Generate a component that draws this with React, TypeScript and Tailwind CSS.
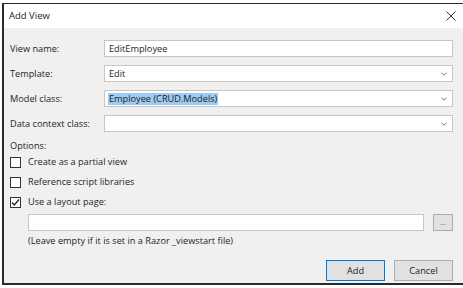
import React from "react";

const Chevron = () => (
  <svg width="6" height="4" viewBox="0 0 6 4" className="shrink-0 mr-[1px]">
    <path d="M0.5 0.8 L3 3.2 L5.5 0.8" fill="none" stroke="#7a7a7a" strokeWidth="1" />
  </svg>
);

const Field = ({ label, children }: { label: string; children: React.ReactNode }) => (
  <div className="flex items-center h-[17px]">
    <div className="w-[94px] shrink-0 text-[#1e1e1e]">{label}</div>
    {children}
  </div>
);

const Box = ({ children, select }: { children?: React.ReactNode; select?: boolean }) => (
  <div className="flex-1 h-[17px] bg-white border border-[#c6c6c6] flex items-center pl-[4px] pr-[4px]">
    <div className="flex-1 flex items-center">{children}</div>
    {select && <Chevron />}
  </div>
);

const Check = ({ label, checked }: { label: string; checked?: boolean }) => (
  <div className="flex items-center h-[20px]">
    <div className="w-[11px] h-[11px] border border-[#333] bg-white flex items-center justify-center mr-[7px]">
      {checked && (
        <svg width="9" height="9" viewBox="0 0 9 9">
          <path d="M1 4.5 L3.3 7 L8 1.5" fill="none" stroke="#222" strokeWidth="1.3" />
        </svg>
      )}
    </div>
    <span>{label}</span>
  </div>
);

export default function App() {
  return (
    <div
      className="w-[463px] h-[288px] bg-white pt-[3px] pl-[2px] pb-[3px] text-[9.2px] leading-[12px] text-[#1e1e1e]"
      style={{ fontFamily: "'Open Sans', 'Noto Sans', sans-serif" }}
    >
      <div className="h-full border-2 border-r-0 border-t-[1px] border-[#2a2a2a] bg-[#f0f0f0] flex flex-col">
        <div className="h-[24px] bg-white flex items-center justify-between pl-[5px] pr-[7px]">
          <span className="text-[9.5px]">Add View</span>
          <svg width="10" height="10" viewBox="0 0 10 10">
            <path d="M0.5 0.5 L9.5 9.5 M9.5 0.5 L0.5 9.5" stroke="#333" strokeWidth="1" />
          </svg>
        </div>
        <div className="flex-1 flex flex-col pl-[6px] pr-[10px] pt-[12px] pb-[2px]">
          <div className="flex flex-col gap-[8px]">
            <Field label="View name:">
              <Box>EditEmployee</Box>
            </Field>
            <Field label="Template:">
              <Box select>Edit</Box>
            </Field>
            <Field label="Model class:">
              <Box select>
                <span className="bg-[#9dcbf2] px-[1px] -ml-[1px]">Employee (CRUD.Models)</span>
              </Box>
            </Field>
            <Field label="Data context class:">
              <Box select />
            </Field>
          </div>
          <div className="mt-[8px]">Options:</div>
          <Check label="Create as a partial view" />
          <Check label="Reference script libraries" />
          <Check label="Use a layout page:" checked />
          <div className="flex items-center pl-[18px] mt-[2px] gap-[9px]">
            <div className="flex-1 h-[17px] bg-white border border-[#c6c6c6]" />
            <div className="w-[20px] h-[17px] bg-[#e1e1e1] border border-[#adadad] flex items-center justify-center text-[7px] leading-none text-[#555]">
              ...
            </div>
          </div>
          <div className="pl-[18px] mt-[4px]">(Leave empty if it is set in a Razor _viewstart file)</div>
          <div className="mt-auto flex justify-end gap-[9px]">
            <div className="w-[59px] h-[21px] bg-[#e1e1e1] border border-[#0078d7] flex items-center justify-center">
              Add
            </div>
            <div className="w-[59px] h-[21px] bg-[#e1e1e1] border border-[#adadad] flex items-center justify-center">
              Cancel
            </div>
          </div>
        </div>
      </div>
    </div>
  );
}
